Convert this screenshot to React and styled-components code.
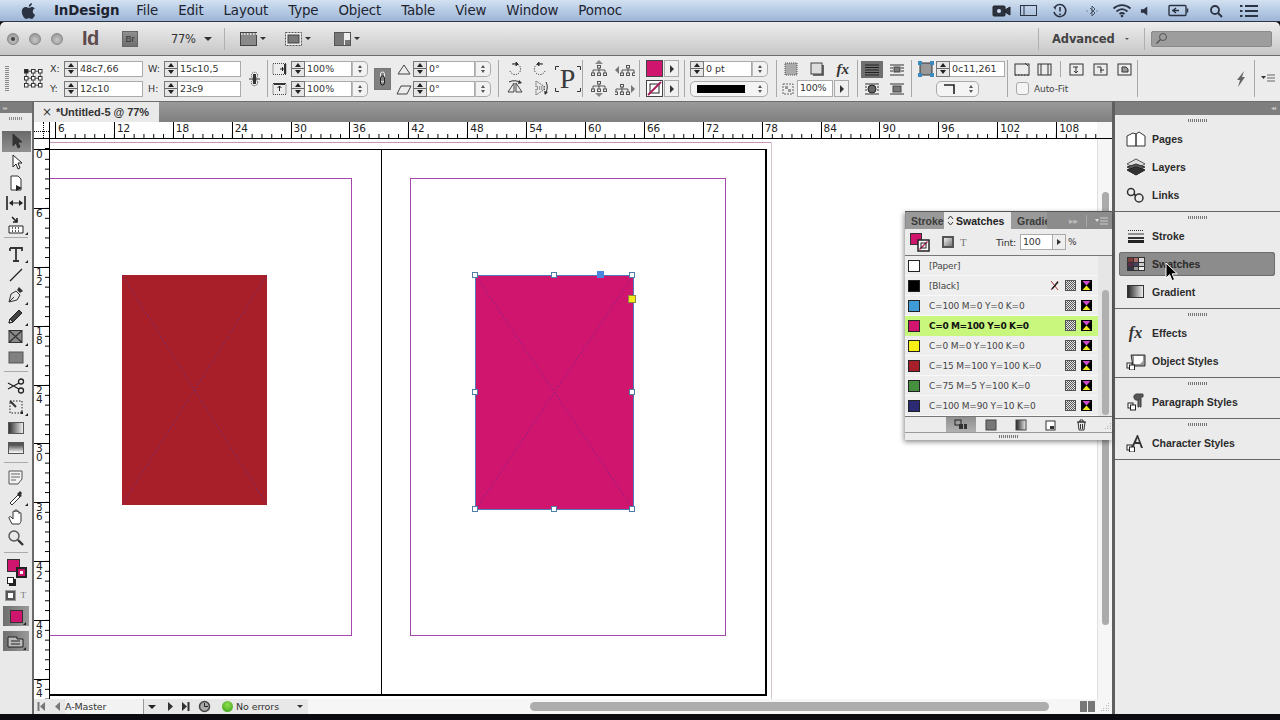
import React from "react";
import styled, { createGlobalStyle } from "styled-components";

const Global = createGlobalStyle`
  html, body { margin: 0; padding: 0; background: #0c0c10; }
  * { box-sizing: border-box; }
  #root { width: 1280px; height: 720px; overflow: hidden; }
`;
const UI = `"DejaVu Sans", "Liberation Sans", sans-serif`;
const BOLD = `"Liberation Sans", "DejaVu Sans", sans-serif`;

const Screen = styled.div`
  width: 1280px; height: 720px; display: flex; flex-direction: column;
  background: #0c0c10; font-family: ${UI}; color: #222; overflow: hidden;
`;

/* ---------- menu bar ---------- */
const MenuBar = styled.div`
  height: 22px; flex: none; display: flex; align-items: center; padding-left: 20px;
  background: linear-gradient(#d3e1f1, #b9cde6 45%, #9eb5d6);
  border-bottom: 1px solid #2c3440;
`;
const MenuItem = styled.span`
  font-size: 13.4px; letter-spacing: -0.14px; color: #1d2430; margin-left: ${p => p.$ml}px;
  font-weight: ${p => (p.$bold ? 700 : 400)};
`;
const MenuExtras = styled.div`
  margin-left: auto; display: flex; align-items: center; width: 294px; height: 21px;
`;
const ExtraSlot = styled.span`
  display: flex; align-items: center; justify-content: center; width: ${p => p.$w}px; flex: none;
`;

/* ---------- application bar ---------- */
const AppBar = styled.div`
  height: 33px; flex: none; display: flex; align-items: center;
  background: linear-gradient(#ededed, #c7c7c7);
  border-radius: 5px 5px 0 0;
`;
const Light = styled.span`
  width: 12px; height: 12px; border-radius: 50%; flex: none; margin-left: ${p => p.$ml}px;
  background: radial-gradient(circle at 50% 60%, #c8c8c8, #8b8b8b);
  border: 1px solid #8a8a8a; display: flex; align-items: center; justify-content: center;
  &::after { content: ""; width: 4px; height: 4px; border-radius: 50%; background: ${p => (p.$dot ? "#444" : "transparent")}; }
`;
const IdLogo = styled.span`
  font: 700 20px "Liberation Sans", sans-serif; color: #5d4a4c; margin-left: 19px; width: 23px; letter-spacing: -0.5px;
`;
const BrBox = styled.span`
  width: 16px; height: 16px; margin-left: 17px; background: linear-gradient(#8f8f8f, #6f6f6f);
  border: 1px solid #666; font: 9px "Liberation Sans", sans-serif; color: #333;
  display: flex; align-items: center; justify-content: center;
`;
const Zoom = styled.span`
  font-size: 11.5px; color: #333; margin-left: 33px; width: 33px; letter-spacing: -0.3px;
`;
const Arrow = styled.span`
  width: 0; height: 0; flex: none; margin-left: ${p => p.$ml || 0}px;
  border-left: ${p => p.$s || 4}px solid transparent; border-right: ${p => p.$s || 4}px solid transparent;
  border-top: ${p => p.$s || 4}px solid ${p => p.$c || "#333"};
`;
const BarSep = styled.span`
  width: 1px; height: 22px; flex: none; background: #b0b0b0; margin-left: ${p => p.$ml}px;
`;
const BarIcon = styled.span`
  display: flex; flex: none; align-items: center; gap: 2px; margin-left: ${p => p.$ml}px;
`;
const Advanced = styled.span`
  font-size: 11.5px; font-weight: 700; color: #444; margin-left: 13px; width: 66px; letter-spacing: -0.1px;
`;
const SearchBox = styled.span`
  width: 121px; height: 16px; margin-left: 6px; background: #9d9d9d; border: 1px solid #8a8a8a;
  border-radius: 2px; display: flex; align-items: center; padding-left: 3px;
`;

/* ---------- control panel ---------- */
const Control = styled.div`
  height: 47px; flex: none; display: flex; align-items: center; background: #ececec;
  border-top: 1px solid #6d6d6d; border-bottom: 1px solid #6d6d6d;
`;
const Slot = styled.div`
  width: ${p => p.$w}px; margin-left: ${p => p.$ml || 0}px; flex: none; height: 36px;
  display: flex; flex-direction: column; justify-content: space-between;
  align-items: ${p => (p.$center ? "center" : "stretch")};
  ${p => p.$middle && "justify-content: center;"}
`;
const VSep = styled.span`
  width: 1px; height: ${p => p.$h || 37}px; background: #a9a9a9; flex: none; margin-left: ${p => p.$ml || 0}px;
`;
const Row = styled.div`
  display: flex; align-items: center; height: 16px; padding-left: ${p => p.$pl || 0}px;
`;
const Around = styled.div`
  display: flex; align-items: center; justify-content: space-around; height: 17px;
`;
const Between = styled(Around)`
  justify-content: space-between; padding: 0 5px 0 2px;
`;
const FitRow = styled(Around)`
  justify-content: flex-start; padding-left: 6px; gap: 7px;
`;
const Lbl = styled.span`
  width: ${p => p.$w}px; flex: none; font-size: 9.5px; color: #333;
`;
const Spin = styled.span`
  width: 14px; height: 16px; flex: none; border: 1px solid #777; background: #e6e6e6;
  display: flex; flex-direction: column; align-items: center; justify-content: space-around;
  position: relative;
  &::after { content: ""; position: absolute; left: 0; right: 0; top: 6.5px; height: 1px; background: #666; }
`;
const SpinUp = styled.i`
  width: 0; height: 0; border-left: 3.5px solid transparent; border-right: 3.5px solid transparent; border-bottom: 4px solid #222;
`;
const SpinDown = styled.i`
  width: 0; height: 0; border-left: 3.5px solid transparent; border-right: 3.5px solid transparent; border-top: 4px solid #222;
`;
const Field = styled.span`
  flex: 1; height: 16px; background: #fff; border: 1px solid #aaa; border-left: none;
  font-size: 9.5px; color: #333; padding-left: 2px; line-height: 14px; white-space: nowrap; overflow: hidden;
`;
const Updown = styled.span`
  width: 16px; height: 16px; flex: none; background: #f2f2f2; border: 1px solid #aaa; border-left: 1px solid #bbb; border-radius: 0 5px 5px 0;
  display: flex; flex-direction: column; align-items: center; justify-content: center; gap: 2px;
`;
const TinyUp = styled.i`
  width: 0; height: 0; border-left: 2.5px solid transparent; border-right: 2.5px solid transparent; border-bottom: 3px solid #555;
`;
const TinyDown = styled.i`
  width: 0; height: 0; border-left: 2.5px solid transparent; border-right: 2.5px solid transparent; border-top: 3px solid #555;
`;
const TinyStack = styled.span`
  display: flex; flex-direction: column; gap: 2px;
`;
const Pill = styled.span`
  flex: ${p => (p.$w ? "none" : 1)}; width: ${p => (p.$w ? p.$w + "px" : "auto")}; margin-left: ${p => p.$ml || 0}px;
  height: 16px; border: 1px solid #aaa; border-radius: 5px; background: #f4f4f4;
  display: flex; align-items: center; justify-content: space-between; padding: 0 5px 0 6px;
`;
const StrokeBar = styled.span`
  display: block; width: 48px; height: 8px; background: #000;
`;
const ChainBtn = styled.span`
  width: 17px; height: 22px; display: flex; align-items: center; justify-content: center;
  background: #808080; border: 1px solid #777;
`;
const PFrame = styled.div`
  display: grid; place-items: center; width: 26px; height: 26px;
  & > * { grid-area: 1 / 1; }
`;
const PGlyph = styled.span`
  font: 400 28px "Liberation Serif", serif; color: #3a3a3a; line-height: 26px;
`;
const ColorChip = styled.span`
  width: 17px; height: 17px; flex: none; border: 1px solid #444; background: ${p => p.$c};
  display: flex; align-items: center; justify-content: center;
`;
const SmallArrowBox = styled.span`
  width: 15px; height: 17px; flex: none; margin-left: 1px; border: 1px solid #aaa; background: #f0f0f0;
  display: flex; align-items: center; justify-content: center;
  &::after { content: ""; border-top: 4px solid transparent; border-bottom: 4px solid transparent; border-left: 4px solid #333; }
`;
const PctBox = styled.span`
  width: 36px; height: 17px; margin-left: 3px; background: #fff; border: 1px solid #aaa;
  font-size: 9.5px; color: #333; line-height: 14px; padding-left: 2px; flex: none; letter-spacing: -0.2px;
`;
const FxMark = styled.span`
  font: italic 700 ${p => p.$s}px "Liberation Serif", serif; color: #333; line-height: ${p => p.$s}px;
`;
const WrapBtn = styled.span`
  width: 22px; height: 17px; display: flex; align-items: center; justify-content: center; flex: none;
  background: ${p => (p.$on ? "#6f6f6f" : "transparent")};
`;
const CheckBox = styled.span`
  width: 13px; height: 13px; flex: none; border: 1px solid #aaa; border-radius: 3px; background: #f4f4f4;
`;
const AutoFit = styled.span`
  font-size: 9px; color: #444; margin-left: 5px; letter-spacing: -0.1px;
`;
const Grip = styled.span`
  width: 4px; height: 26px; display: block; margin-left: 5px;
  background: repeating-linear-gradient(#888 0 1px, transparent 1px 2px);
`;
const BoltSlot = styled(Slot)`
  align-items: flex-end; padding-right: 6px;
`;
const SpinSpacer = styled.span`
  width: 19px; flex: none;
`;

/* ---------- workspace ---------- */
const Workspace = styled.div`
  height: 612px; flex: none; display: flex;
`;
const ToolColumn = styled.div`
  width: 34px; flex: none; background: #e9e9e9; border-right: 2px solid #6a6a6a;
  display: flex; flex-direction: column; align-items: center;
`;
const ToolHead = styled.div`
  width: 100%; height: 11px; background: #7d7d7d; color: #bbb; font-size: 6px; line-height: 11px; padding-left: 3px; letter-spacing: -1px; flex: none;
`;
const HGrip = styled.div`
  width: 14px; height: 3px; margin: 4px auto 11px; flex: none;
  background: repeating-linear-gradient(90deg, #8a8a8a 0 1px, transparent 1px 2px);
`;
const Tool = styled.div`
  width: 29px; height: ${p => p.$h || 20.7}px; flex: none; display: flex; align-items: center; justify-content: center;
  background: ${p => (p.$on ? "linear-gradient(#6a6a6a,#909090)" : "transparent")};
  position: relative;
`;
const ToolSep = styled.div`
  width: 24px; height: 1px; background: #aaa; flex: none; margin: ${p => p.$m || "3px 0"};
`;
const Doc = styled.div`
  width: 1078px; flex: none; display: flex; flex-direction: column; position: relative;
`;
const TabBar = styled.div`
  height: 20px; flex: none; background: linear-gradient(#9a9a9a, #7f7f7f); display: flex;
`;
const Tab = styled.div`
  width: 125px; background: #e9e9e9; display: flex; align-items: center; padding-left: 8px;
  font: 700 11px ${BOLD}; color: #333; letter-spacing: -0.05px;
`;
const TabClose = styled.span`
  width: 14px; font: 400 12px ${UI}; flex: none;
`;
const RulerRow = styled.div`
  height: 17px; flex: none; display: flex; background: #fff; border-bottom: 1px solid #000;
`;
const Corner = styled.div`
  width: 16px; flex: none; border-right: 1px solid #000; position: relative;
  &::before { content: ""; position: absolute; left: 9px; top: 0; bottom: 0; border-left: 1px dotted #000; }
  &::after { content: ""; position: absolute; top: 9px; left: 0; right: 0; border-top: 1px dotted #000; }
`;
const HRuler = styled.div`
  width: 1047px; flex: none; display: flex; overflow: hidden;
`;
const HCell = styled.div`
  width: ${p => p.$w || 58.9}px; flex: none; border-left: ${p => (p.$plain ? "none" : "1px solid #000")};
  font-size: 10.5px; line-height: 13px; padding-left: 2px; color: #222;
  background: repeating-linear-gradient(90deg, transparent 0 9.2px, #000 9.2px 10.0px, transparent 10px 9.8px) left bottom / 9.82px 4px repeat-x;
`;
const ScrollCorner = styled.div`
  flex: 1; background: #f6f6f6;
`;
const CanvasRow = styled.div`
  height: 560px; flex: none; display: flex;
`;
const VRuler = styled.div`
  width: 16px; flex: none; background: #fff; border-right: 1px solid #000; overflow: hidden; display: flex; flex-direction: column;
`;
const VCell = styled.div`
  height: ${p => p.$h || 58.9}px; flex: none; border-top: ${p => (p.$plain ? "none" : "1px solid #000")};
  font-size: 10.5px; line-height: 9px; padding: 0 0 0 2px; color: #222; white-space: pre-line;
  background: repeating-linear-gradient(180deg, transparent 0 9.2px, #000 9.2px 10px) right top / 4px 9.82px repeat-y;
`;
const Canvas = styled.div`
  width: 1047px; flex: none; position: relative; background: #fff; overflow: hidden;
`;
const VScroll = styled.div`
  flex: 1; background: #f6f6f6; border-left: 1px solid #e0e0e0; padding: 53px 3px 0 4px;
`;
const VThumb = styled.div`
  height: 433px; background: #ababab; border-radius: 4px;
`;
const Page = styled.div`
  position: absolute; left: 0; top: 10px; width: 717px; height: 547px;
  border-top: 1px solid #000; border-right: 2px solid #000; border-bottom: 2px solid #000;
`;
const Spine = styled.div`
  position: absolute; left: 331px; top: 10px; width: 1px; height: 547px; background: #000;
`;
const BleedH = styled.div`
  position: absolute; left: 0; top: 3px; width: 721px; height: 1px; background: #c695b8;
`;
const BleedV = styled.div`
  position: absolute; left: 721px; top: 3px; bottom: 0; width: 1px; background: #d3c4cf;
`;
const Margin = styled.div`
  position: absolute; left: ${p => p.$x}px; top: 39px; width: ${p => p.$w}px; height: 458px; border: 1px solid #a447ab;
`;
const Frame = styled.div`
  position: absolute; left: ${p => p.$x}px; top: 136px; width: ${p => p.$w}px; height: ${p => p.$h}px; background: ${p => p.$c};
  ${p => p.$sel && "border: 1px solid #5577b8;"}
`;
const Handle = styled.span`
  position: absolute; left: ${p => p.$x}px; top: ${p => p.$y}px; width: ${p => p.$s || 6}px; height: ${p => p.$s || 6}px;
  background: ${p => p.$c || "#fff"}; border: 1px solid ${p => p.$b || "#4f7fa8"};
`;
const Status = styled.div`
  height: 15px; flex: none; display: flex; align-items: center; background: #f6f6f6;
`;
const StatusLeft = styled.div`
  width: 274px; flex: none; height: 15px; background: #e8e8e8; display: flex; align-items: center;
`;
const StatusItem = styled.span`
  display: flex; align-items: center; flex: none; margin-left: ${p => p.$ml}px;
`;
const MasterField = styled.span`
  width: 79px; flex: none; margin-left: 4px; font-size: 9.5px; color: #333; height: 15px; line-height: 15px; background: #f2f2f2; border-right: 1px solid #999; letter-spacing: -0.1px;
`;
const StatusText = styled.span`
  font-size: 9.5px; color: #333; margin-left: 3px; width: 58px; letter-spacing: -0.1px;
`;
const GreenDot = styled.span`
  width: 11px; height: 11px; border-radius: 50%; background: radial-gradient(circle at 50% 35%, #8ee04c, #3b9a1c); flex: none; margin-left: 10px;
`;
const HThumb = styled.div`
  width: 519px; height: 9px; border-radius: 5px; background: #adadad; margin-left: 222px; flex: none;
`;
const Split = styled.span`
  width: 7px; height: 11px; background: #777; flex: none; margin-left: ${p => p.$ml}px;
`;
const Resize = styled.span`
  width: 9px; height: 9px; margin-left: ${p => p.$ml}px; flex: none;
  background: radial-gradient(circle, #777 0 .6px, transparent .8px) 0 0 / 2.5px 2.5px;
  clip-path: polygon(100% 0, 100% 100%, 0 100%);
`;

/* ---------- floating swatches panel ---------- */
const Swatches = styled.div`
  position: absolute; left: 871px; top: 109px; width: 207px; height: 229px; background: #ececec; z-index: 3;
  box-shadow: -1px 2px 5px rgba(0,0,0,.45); display: flex; flex-direction: column;
`;
const PanelTabs = styled.div`
  height: 18px; flex: none; background: #8c8c8c; display: flex; align-items: stretch; padding-left: 1px; border-top: 1px solid #555;
`;
const PanelTab = styled.div`
  width: ${p => p.$w}px; flex: none; overflow: hidden; white-space: nowrap;
  font: 700 10.5px ${BOLD}; line-height: 19px;
  padding-left: ${p => p.$pl}px; display: flex; align-items: flex-start; gap: 2px;
  background: ${p => (p.$on ? "#ececec" : "#9a9a9a")}; color: ${p => (p.$on ? "#222" : "#3c3c3c")};
`;
const TabChevrons = styled.span`
  display: flex; align-items: center; height: 17px; flex: none;
`;
const TabTools = styled.div`
  flex: 1; display: flex; align-items: center; justify-content: flex-end; gap: 8px; padding-right: 4px; color: #bbb; font-size: 9px;
`;
const TabDivider = styled.span`
  width: 1px; height: 12px; background: #a8a8a8;
`;
const TintRow = styled.div`
  height: 27px; flex: none; display: flex; align-items: center; padding-left: 5px; border-bottom: 1px solid #777;
`;
const TintGap = styled.span`
  width: 12px; flex: none;
`;
const TintBox = styled.span`
  width: 12px; height: 12px; flex: none; background: linear-gradient(135deg,#eee,#777); border: 2px solid #555;
`;
const TintT = styled.span`
  font: 11px "Liberation Serif", serif; color: #777; width: 9px; margin-left: 6px; flex: none;
`;
const TintLabel = styled.span`
  font-size: 9.5px; color: #333; margin-left: 27px; width: 23px; letter-spacing: -0.2px;
`;
const TintInput = styled.span`
  width: 33px; height: 16px; background: #fff; border: 1px solid #aaa; font-size: 9.5px; line-height: 14px; padding-left: 2px; color: #333; letter-spacing: -0.2px; margin-left: 1px;
`;
const TintArrow = styled.span`
  width: 13px; height: 16px; background: #eee; border: 1px solid #aaa; border-left: none; display: flex; align-items: center; justify-content: center;
  &::after { content: ""; border-top: 3.5px solid transparent; border-bottom: 3.5px solid transparent; border-left: 4px solid #333; }
`;
const Pct = styled.span`
  font-size: 9px; color: #333; margin-left: 2px;
`;
const ListWrap = styled.div`
  height: 161px; flex: none; display: flex; border-bottom: 1px solid #777;
`;
const List = styled.div`
  width: 193px; flex: none; display: flex; flex-direction: column;
`;
const SwatchRow = styled.div`
  height: 20px; flex: none; display: flex; align-items: center; padding-left: 3px;
  background: ${p => (p.$on ? "#c9f77d" : "#eeeeee")}; border-bottom: 1px solid ${p => (p.$on ? "#c9f77d" : "#f8f8f8")};
`;
const Chip = styled.span`
  width: 12px; height: 12px; flex: none; background: ${p => p.$c}; border: 1px solid #222;
`;
const SwatchName = styled.span`
  font-size: 9px; margin-left: 9px; letter-spacing: ${p => (p.$on ? "-0.38px" : "-0.18px")}; color: ${p => (p.$on ? "#111" : "#444")}; font-weight: ${p => (p.$on ? 700 : 400)};
  flex: 1; white-space: nowrap;
`;
const RowIcons = styled.span`
  display: flex; align-items: center; gap: 5px; margin-right: 6px; flex: none;
`;
const Checker = styled.span`
  width: 11px; height: 11px; flex: none; border: 1px solid #555;
  background: repeating-conic-gradient(#555 0 25%, #e8e8e8 0 50%) 0 0 / 2px 2px;
`;
const ListScroll = styled.div`
  flex: 1; background: #e6e6e6; padding: 34px 3px 1px 4px;
`;
const ListThumb = styled.div`
  height: 125px; background: #b0b0b0; border-radius: 4px;
`;
const PanelFoot = styled.div`
  height: 16px; flex: none; display: flex; align-items: center; padding-left: 41px; border-bottom: 1px solid #999;
`;
const FootBtn = styled.span`
  width: 30px; height: 15px; flex: none; display: flex; align-items: center; justify-content: center;
  background: ${p => (p.$on ? "linear-gradient(#909090,#b0b0b0)" : "transparent")};
`;
const PanelGrip = styled.div`
  height: 7px; flex: none; display: flex; align-items: center; justify-content: center;
`;
const SmallGrip = styled.span`
  display: block; width: 20px; height: 3px; background: repeating-linear-gradient(90deg, #777 0 1px, transparent 1px 2px);
`;

/* ---------- dock ---------- */
const Dock = styled.div`
  flex: 1; background: #ebebeb; border-left: 3px solid #5f5f5f; display: flex; flex-direction: column; position: relative;
`;
const DockHead = styled.div`
  height: 13px; flex: none; background: #7e7e7e; color: #c8c8c8; font-size: 6px; line-height: 12px; text-align: right; padding-right: 5px; letter-spacing: -1px;
`;
const DockGroup = styled.div`
  flex: none; display: flex; flex-direction: column; padding: 0 0 2px; border-bottom: 1px solid #666;
`;
const DockGrip = styled.div`
  height: 10px; display: flex; align-items: center; justify-content: center;
`;
const DockItem = styled.div`
  height: 24px; margin: 2px 5px 2px 4px; display: flex; align-items: center; padding-left: 5px; border-radius: 3px;
  font: 700 10.5px ${BOLD}; color: #2b2b2b;
  background: ${p => (p.$on ? "#8c8c8c" : "transparent")}; ${p => p.$on && "box-shadow: inset 0 0 0 1px #6d6d6d;"}
`;
const DockIcon = styled.span`
  width: 23px; flex: none; margin-right: 5px; display: flex; align-items: center; justify-content: center;
`;
const Cursor = styled.svg`
  position: absolute; left: 50px; top: 160px; z-index: 5;
`;

/* ---------- icons ---------- */
const S = ({ w = 16, h = 16, vb, children }) => (
  <svg width={w} height={h} viewBox={vb || `0 0 ${w} ${h}`} fill="none" stroke="#222" strokeWidth="1">{children}</svg>
);
const Apple = () => (
  <svg width="17" height="18" viewBox="0 0 17 17"><path fill="#2b3242" d="M12.2 4.5c-1.4 0-2.3.8-3.3.8-1.1 0-2-.8-3.2-.8C3.7 4.5 1.8 6.2 1.8 9c0 3.4 2.5 7.4 4.5 7.4 1 0 1.6-.7 2.7-.7 1.1 0 1.6.7 2.7.7 1.4 0 2.7-2.2 3.4-4.2-1.4-.6-2.3-1.7-2.3-3.2 0-1.3.8-2.3 1.9-3-.7-1-1.8-1.5-2.5-1.5zM8.8 4.2c0-1.9 1.3-3.5 3.2-3.7.1 2-1.4 3.7-3.2 3.7z"/></svg>
);
const Ex = {
  Cam: () => <S w={20} h={13}><rect x="1" y="2" width="12" height="10" fill="#2b3242" rx="1"/><path d="M13 6l5-3v8l-5-3z" fill="#2b3242"/><circle cx="7" cy="7" r="2" fill="#d0dcee" stroke="none"/></S>,
  Disp: () => <S w={18} h={13}><rect x=".5" y="1.5" width="16" height="10" stroke="#2b3242"/><path d="M4 1.5v10" stroke="#2b3242"/></S>,
  Time: () => <S w={16} h={16}><path d="M3 4a6 6 0 1 1-1 5" stroke="#2b3242" strokeWidth="1.6"/><path d="M8 4v4.5M8 10.5v1.5" stroke="#2b3242" strokeWidth="1.6"/><path d="M1 3.5l3 .5-.5 3z" fill="#2b3242" stroke="none"/></S>,
  Bt: () => <S w={14} h={14}><path d="M5 4l5 5-3 3V2l3 3-5 5" stroke="#4a5468"/><path d="M1.5 7h1M11.5 7h1" stroke="#4a5468"/></S>,
  Wifi: () => <S w={20} h={15}><path d="M1.5 5.5c5-4.5 12-4.5 17 0M4.5 8.5c3.5-3 7.5-3 11 0M7.5 11c1.5-1.2 3.5-1.2 5 0" stroke="#2b3242" strokeWidth="1.7"/><circle cx="10" cy="13" r="1.3" fill="#2b3242" stroke="none"/></S>,
  Vol: () => <S w={11} h={12}><path d="M1 4h3l4-3v10L4 8H1z" fill="#2b3242" stroke="none"/></S>,
  Bat: () => <S w={22} h={13}><rect x="1" y="1.5" width="17" height="10" rx="1" stroke="#2b3242" strokeWidth="1.4"/><path d="M19.5 4.5v4" stroke="#2b3242" strokeWidth="1.5"/><path d="M4 6.5h7M8 4l-3 2.5 3 2.5" stroke="#2b3242" strokeWidth="1.4"/></S>,
  Find: () => <S w={14} h={14}><circle cx="6" cy="6" r="4" stroke="#2b3242" strokeWidth="1.8"/><path d="M9 9l4 4" stroke="#2b3242" strokeWidth="2"/></S>,
  List: () => <S w={20} h={14}><path d="M6 2h13M6 7h13M6 12h13" stroke="#2b3242" strokeWidth="2.2"/><path d="M1 2h2.5M1 7h2.5M1 12h2.5" stroke="#2b3242" strokeWidth="2.2"/></S>,
};
const RefPoint = () => (
  <S w={19} h={19}>
    {[2, 9, 16].flatMap(y => [2, 9, 16].map(x => (
      <rect key={x + "-" + y} x={x - 1.5} y={y - 1.5} width="3.5" height="3.5" fill={x === 2 && y === 2 ? "#222" : "#fff"} stroke="#333" />
    )))}
    <path d="M4 2.2h3M11 2.2h3M4 9.2h3M11 9.2h3M4 16.2h3M11 16.2h3M2.2 4v3M9.2 4v3M16.2 4v3M2.2 11v3M9.2 11v3M16.2 11v3" stroke="#444"/>
  </S>
);
const Grid4 = () => (
  <S w={13} h={16}><circle cx="6.5" cy="4.5" r="3.2" stroke="#333" strokeDasharray="1 1"/><circle cx="6.5" cy="11.5" r="3.2" stroke="#333" strokeDasharray="1 1"/><path d="M1 8h11" stroke="#333"/><path d="M5 3h3v10H5z" fill="#333" stroke="none"/></S>
);
const Rot = ({ flip }) => (
  <S w={16} h={16}><g transform={flip ? "matrix(-1 0 0 1 16 0)" : undefined}><path d="M3 10a5.5 5.5 0 1 0 3-7" strokeDasharray="1.2 1.2" stroke="#333"/><path d="M5 3h6M11 3l-2-2v4z" fill="#333" stroke="#333"/></g></S>
);
const FlipI = ({ v }) => (
  <S w={18} h={18}><g transform={v ? "rotate(90 9 9)" : undefined}><path d="M8 4L2 13h6zM10 4l6 9h-6z" stroke="#444" strokeDasharray={v ? "1.2 1" : "none"}/><path d="M3 3q6-3 12 1" stroke="#333"/><path d="M13 1l3 3-4 1z" fill="#333" stroke="none"/></g></S>
);
const Tree = ({ arrow }) => {
  const dx = arrow === "left" ? 3 : arrow === "right" ? -3 : 0;
  const dy = arrow === "down" ? -3 : 0;
  return (
    <S w={20} h={18}>
      <g transform={`translate(${dx} ${dy})`}>
        <rect x="8.5" y="5.5" width="3" height="2.5" stroke="#555"/><path d="M10 8v2M4 13v-3h12v3M10 10v3" stroke="#555"/>
        <rect x="2.5" y="13" width="3" height="2.5" stroke="#555"/><rect x="8.5" y="13" width="3" height="2.5" stroke="#555"/><rect x="14.5" y="13" width="3" height="2.5" stroke="#555"/>
      </g>
      {arrow === "up" && <path d="M10 0l4 4H6z" fill="#888" stroke="none"/>}
      {arrow === "down" && <path d="M10 18l4-4H6z" fill="#888" stroke="none"/>}
      {arrow === "left" && <path d="M0 10l4-4v8z" fill="#777" stroke="none"/>}
      {arrow === "right" && <path d="M20 10l-4-4v8z" fill="#777" stroke="none"/>}
    </S>
  );
};

const ToolI = {
  arrow: <S><path d="M5 1v12l3-3 2 5 2-1-2-5h4z" fill="#333" stroke="#333"/></S>,
  white: <S><path d="M5 1v12l3-3 2 5 2-1-2-5h4z" fill="#fff" stroke="#222"/></S>,
  page: <S><path d="M3 1h7l3 3v11H3z" fill="#fff" stroke="#333"/><path d="M8 10l6 3-6 3z" fill="#222" stroke="none"/></S>,
  gap: <S w={20} h={16}><path d="M1 1v14M19 1v14" stroke="#222" strokeWidth="1.6"/><path d="M4 8h12" stroke="#222"/><path d="M3 8l4-3v6zM17 8l-4-3v6z" fill="#222" stroke="none"/></S>,
  coll: <S w={18} h={18}><path d="M2 10h14v7H2z" stroke="#222" fill="#fff"/><path d="M5 12h1M8 12h1M11 12h1M5 15h1M8 15h1M11 15h1" stroke="#222" strokeWidth="1.5"/><path d="M5 1l5 5M10 2v4H6" stroke="#222" strokeWidth="1.6"/></S>,
  type: <S w={18} h={18}><path d="M3 3h12v3M3 3v3M9 3v13M6 16h6" stroke="#333" strokeWidth="1.8"/></S>,
  line: <S><path d="M2 14L14 2" stroke="#222" strokeWidth="1.2"/></S>,
  pen: <S w={18} h={18}><path d="M2 16l2-8 5-3 4 4-3 5z" fill="#e8e8e8" stroke="#333"/><path d="M2 16l5-5" stroke="#333"/><path d="M10 4l2-3 4 4-3 2z" fill="#333" stroke="none"/></S>,
  pencil: <S w={18} h={18}><path d="M2 16l1-4 9-9 3 3-9 9z" fill="#444" stroke="#222"/><path d="M2 16l1-4 3 3z" fill="#ddd" stroke="#222"/></S>,
  frame: <S w={16} h={16}><rect x="1" y="1.5" width="13" height="12" fill="#8a8a8a" stroke="#333"/><path d="M1 1.5l13 12M14 1.5L1 13.5" stroke="#333" strokeWidth="1.2"/></S>,
  rect: <S w={16} h={16}><rect x="1" y="2" width="14" height="11" fill="#808080" stroke="#555"/></S>,
  sci: <S w={18} h={16}><circle cx="14" cy="3.5" r="2.5" stroke="#222" strokeWidth="1.3"/><circle cx="14" cy="12.5" r="2.5" stroke="#222" strokeWidth="1.3"/><path d="M12 5L1 11M12 11L1 5" stroke="#222" strokeWidth="1.3"/></S>,
  free: <S><rect x="2" y="2" width="12" height="12" strokeDasharray="1.5 1.5" stroke="#222"/><rect x="12.5" y="12.5" width="2.5" height="2.5" fill="#222" stroke="none"/><path d="M2 2l6 6" stroke="#333" strokeWidth="2"/></S>,
  note: <S w={16} h={16}><path d="M1 2h13v8l-4 5H1z" fill="#f2f2f2" stroke="#555"/><path d="M3 5h9M3 8h9M3 11h5" stroke="#666"/></S>,
  drop: <S><path d="M2 14l8-8 2 2-8 8z" fill="#fff" stroke="#333"/><path d="M10 4l2-2 2 2-1 2 1 1-2 1-3-3z" fill="#333" stroke="none"/></S>,
  hand: <S w={18} h={18}><path d="M5 16L2 10c-.5-1 1-2 2-1l2 2V4c0-1.5 2-1.5 2 0V2.8c0-1.5 2-1.5 2 0V4c0-1.4 2-1.4 2 0v1.5c0-1.3 2-1.3 2 0V12c0 2-1 4-2 4z" fill="#fff" stroke="#333"/></S>,
  zoom: <S w={18} h={18}><circle cx="7" cy="7" r="5" fill="#e8e8e8" stroke="#555" strokeWidth="1.4"/><path d="M11 11l5 5" stroke="#333" strokeWidth="2.4"/></S>,
  view: <S w={18} h={16}><path d="M1 4h9v2h6v8H1z" fill="#bbb" stroke="#222"/><path d="M4 8h9M4 11h9" stroke="#222"/></S>,
};
const CornerTri = styled.i`
  position: absolute; right: 3px; bottom: 1px; width: 0; height: 0;
  border-left: 3px solid transparent; border-bottom: 3px solid #222;
`;
const GradBox = styled.span`
  width: 16px; height: 12px; flex: none; border: 1px solid #555;
  background: ${p => (p.$fe ? "linear-gradient(#555 20%, #fff 100%)" : "linear-gradient(90deg,#333,#eee)")};
`;
const FillWrap = styled.div`
  width: 29px; height: 29px; flex: none; position: relative;
`;
const FillChip = styled.span`
  position: absolute; left: 5px; top: 0; width: 13px; height: 13px; background: #d0156f; border: 1px solid #333;
`;
const StrokeChip = styled.span`
  position: absolute; left: 14px; top: 8px; width: 11px; height: 11px; background: #fff; border: 2px solid #222;
  box-shadow: inset 0 0 0 2px #d0156f;
`;
const SmallChips = styled.span`
  position: absolute; left: 5px; top: 18px; width: 7px; height: 7px; background: #fff; border: 1px solid #222; box-shadow: 2px 2px 0 #222;
`;
const ContainerRow = styled.div`
  width: 29px; height: 12px; flex: none; display: flex; align-items: center; justify-content: center; gap: 6px; margin: 1px 0 5px;
`;
const MiniBox = styled.span`
  width: 9px; height: 9px; flex: none; background: #fff; border: 2px solid #555; box-shadow: 0 0 0 1px #999;
`;
const TMark = styled.span`
  font: 9px "Liberation Serif", serif; color: #777; width: 6px;
`;
const ApplyTile = styled.div`
  width: 26px; height: 20px; flex: none; margin-bottom: 5px; background: linear-gradient(90deg,#6e6e6e,#9a9a9a); display: flex; align-items: center; justify-content: center; position: relative;
`;
const ApplyChip = styled.span`
  width: 13px; height: 13px; background: #d0156f; border: 1px solid #333;
`;

const SW = [
  ["[Paper]", "#fff", "none"], ["[Black]", "#000", "x"], ["C=100 M=0 Y=0 K=0", "#3f9ad8"],
  ["C=0 M=100 Y=0 K=0", "#d0156f", "", true], ["C=0 M=0 Y=100 K=0", "#f8ee16"],
  ["C=15 M=100 Y=100 K=0", "#a81f2c"], ["C=75 M=5 Y=100 K=0", "#458f3f"], ["C=100 M=90 Y=10 K=0", "#2b2a72"],
];
const Cmyk = () => (
  <S w={11} h={11}>
    <rect x=".5" y=".5" width="10" height="10" fill="#000" stroke="#000"/>
    <path d="M1.5 1l4 4.5 4-4.5z" fill="#d04bd0" stroke="none"/>
    <path d="M1.5 10l4-4.5 4 4.5z" fill="#f0e820" stroke="none"/>
  </S>
);
const Diag = ({ c }) => (
  <svg width="100%" height="100%" viewBox="0 0 100 100" preserveAspectRatio="none" style={{ display: "block" }}>
    <path d="M0 0L100 100M100 0L0 100" stroke={c} strokeOpacity=".7" strokeWidth="1" strokeDasharray="1.5 2.5" fill="none" vectorEffect="non-scaling-stroke" />
  </svg>
);

const DOCK = [
  [["Pages", <S w={20} h={16}><path d="M1 5l6-3 3 1v12H1zM10 3l3-2 6 4v10h-9z" fill="#fff" stroke="#333"/></S>],
   ["Layers", <S w={22} h={18}><path d="M11 1l9 5-9 5-9-5z" fill="#ddd" stroke="#555"/><path d="M2 9l9 5 9-5-9-3z" fill="#555" stroke="#333"/><path d="M2 12l9 5 9-5-9-3z" fill="#333" stroke="#222"/></S>],
   ["Links", <S w={20} h={16}><circle cx="5" cy="5" r="3.5" stroke="#333" strokeWidth="1.5"/><circle cx="13" cy="11" r="4" stroke="#333" strokeWidth="1.5"/><path d="M8 7l2 2" stroke="#333" strokeWidth="2"/></S>]],
  [["Stroke", <S w={18} h={14}><path d="M1 1.5h16" stroke="#333" strokeDasharray="1 1"/><path d="M1 5h16" stroke="#333"/><path d="M1 9h16" stroke="#333" strokeWidth="2"/><path d="M1 12.5h16" stroke="#222" strokeWidth="3"/></S>],
   ["Swatches", <S w={18} h={14}><rect width="18" height="14" fill="#333" stroke="none"/><rect x="1" y="1" width="5" height="4" fill="#7a3a3a" stroke="none"/><rect x="7" y="1" width="4" height="4" fill="#aa6a6a" stroke="none"/><rect x="12" y="1" width="5" height="4" fill="#ddd" stroke="none"/><rect x="1" y="6" width="5" height="3" fill="#5a2a4a" stroke="none"/><rect x="7" y="6" width="4" height="3" fill="#444466" stroke="none"/><rect x="12" y="6" width="5" height="3" fill="#ccc" stroke="none"/><rect x="1" y="10" width="5" height="3" fill="#334" stroke="none"/><rect x="7" y="10" width="4" height="3" fill="#999" stroke="none"/><rect x="12" y="10" width="5" height="3" fill="#eee" stroke="none"/></S>],
   ["Gradient", <S w={18} h={14}><defs><linearGradient id="dg"><stop offset="0" stopColor="#222"/><stop offset="1" stopColor="#f4f4f4"/></linearGradient></defs><rect x=".5" y=".5" width="16" height="12" fill="url(#dg)" stroke="#333"/></S>]],
  [["Effects", <FxMark $s={16}>fx</FxMark>],
   ["Object Styles", <S w={20} h={18}><path d="M5 3h14v11H7z" fill="#999" stroke="#333"/><path d="M8 4h9v5l-3 3H8z" fill="#fff" stroke="none"/><rect x="1" y="11" width="5" height="5" fill="#fff" stroke="#222"/><rect x="3.5" y="13" width="5" height="5" fill="#fff" stroke="#222"/></S>]],
  [["Paragraph Styles", <S w={20} h={18}><path d="M10 1h7v3h-2v10h-1V6h-1v8h-1V7a3 3 0 0 1-2-6z" fill="#555" stroke="#444"/><rect x="2" y="10" width="5" height="5" fill="#fff" stroke="#222"/><rect x="4.5" y="12" width="5" height="5" fill="#fff" stroke="#222"/></S>]],
  [["Character Styles", <S w={20} h={18}><path d="M5 14l6-13h1l5 13h-2l-1.5-4H9l-2 4zM10 8h3l-1.5-4z" fill="#333" stroke="none"/><rect x="1" y="11" width="5" height="5" fill="#fff" stroke="#222"/><rect x="3.5" y="13" width="5" height="5" fill="#fff" stroke="#222"/></S>]],
];

const Spinner = () => <Spin><SpinUp /><SpinDown /></Spin>;
const UD = () => <Updown><TinyUp /><TinyDown /></Updown>;
const Tri = ({ c = "#333", dir = "right" }) => (
  <S w={7} h={9}>{dir === "right" ? <path d="M1 0l5 4.5L1 9z" fill={c} stroke="none"/> : <path d="M6 0L1 4.5 6 9z" fill={c} stroke="none"/>}</S>
);

const hLabels = [6,12,18,24,30,36,42,48,54,60,66,72,78,84,90,96,102,108];
const vLabels = ["0","6","1\n2","1\n8","2\n4","3\n0","3\n6","4\n2","4\n8"];

export default function App() {
  return (
    <Screen>
      <Global />
      <MenuBar>
        <Apple />
        <MenuItem $ml={17} $bold>InDesign</MenuItem>
        <MenuItem $ml={17}>File</MenuItem>
        <MenuItem $ml={20}>Edit</MenuItem>
        <MenuItem $ml={20}>Layout</MenuItem>
        <MenuItem $ml={20}>Type</MenuItem>
        <MenuItem $ml={20}>Object</MenuItem>
        <MenuItem $ml={20}>Table</MenuItem>
        <MenuItem $ml={20}>View</MenuItem>
        <MenuItem $ml={20}>Window</MenuItem>
        <MenuItem $ml={20}>Pomoc</MenuItem>
        <MenuExtras>
          <ExtraSlot $w={32}><Ex.Cam /></ExtraSlot>
          <ExtraSlot $w={22}><Ex.Disp /></ExtraSlot>
          <ExtraSlot $w={40}><Ex.Time /></ExtraSlot>
          <ExtraSlot $w={24}><Ex.Bt /></ExtraSlot>
          <ExtraSlot $w={36}><Ex.Wifi /></ExtraSlot>
          <ExtraSlot $w={10}><Ex.Vol /></ExtraSlot>
          <ExtraSlot $w={58}><Ex.Bat /></ExtraSlot>
          <ExtraSlot $w={16}><Ex.Find /></ExtraSlot>
          <ExtraSlot $w={50}><Ex.List /></ExtraSlot>
        </MenuExtras>
      </MenuBar>

      <AppBar>
        <Light $ml={7} $dot />
        <Light $ml={10} />
        <Light $ml={10} />
        <IdLogo>Id</IdLogo>
        <BrBox>Br</BrBox>
        <Zoom>77%</Zoom>
        <Arrow $ml={0} />
        <BarSep $ml={12} />
        <BarIcon $ml={15}>
          <S w={18} h={16}><rect x=".5" y="1.5" width="16" height="13" fill="#8a8a8a" stroke="#444"/><path d="M1 3h16" stroke="#ddd" strokeDasharray="1.5 1.5" strokeWidth="2"/></S>
          <Arrow $s={3} />
        </BarIcon>
        <BarIcon $ml={19}>
          <S w={18} h={16}><rect x=".5" y="1.5" width="16" height="13" fill="#eee" stroke="#555" strokeDasharray="2 1"/><rect x="3" y="4" width="11" height="8" fill="#777" stroke="#444"/></S>
          <Arrow $s={3} />
        </BarIcon>
        <BarIcon $ml={23}>
          <S w={18} h={16}><rect x=".5" y="1.5" width="16" height="13" fill="#eee" stroke="#555"/><rect x="1" y="2" width="9" height="12" fill="#777" stroke="none"/><rect x="11" y="9" width="5" height="5" fill="#777" stroke="none"/></S>
          <Arrow $s={3} />
        </BarIcon>
        <BarSep $ml={678} />
        <Advanced>Advanced</Advanced>
        <Arrow $s={2.5} $ml={7} $c="#555" />
        <BarSep $ml={15} />
        <SearchBox>
          <S w={13} h={13}><circle cx="8" cy="5" r="3.5" stroke="#555"/><path d="M5.5 7.5L1.5 11.5" stroke="#555" strokeWidth="1.4"/></S>
        </SearchBox>
      </AppBar>

      <Control>
        <Slot $w={20} $middle><Grip /></Slot>
        <Slot $w={26} $middle $center><RefPoint /></Slot>
        <Slot $w={93} $ml={4}>
          <Row><Lbl $w={14}>X:</Lbl><Spinner /><Field>48c7,66</Field></Row>
          <Row><Lbl $w={14}>Y:</Lbl><Spinner /><Field>12c10</Field></Row>
        </Slot>
        <Slot $w={93} $ml={5}>
          <Row><Lbl $w={16}>W:</Lbl><Spinner /><Field>15c10,5</Field></Row>
          <Row><Lbl $w={16}>H:</Lbl><Spinner /><Field>23c9</Field></Row>
        </Slot>
        <Slot $w={26} $middle $center><Grid4 /></Slot>
        <VSep />
        <Slot $w={96} $ml={4}>
          <Row><S w={16} h={14}><rect x="1" y="1.5" width="13" height="11" stroke="#444" strokeDasharray="1 1"/><path d="M8 7h4M10.5 5v4" stroke="#222"/><path d="M13 2v10" stroke="#333" strokeWidth="2"/></S><Lbl $w={3} /><Spinner /><Field>100%</Field><UD /></Row>
          <Row><S w={16} h={14}><rect x="1" y="1.5" width="13" height="11" stroke="#444" strokeDasharray="1 1"/><path d="M7.5 4v5M5.5 6l2-2 2 2" stroke="#222"/><path d="M2 2h11" stroke="#333" strokeWidth="2"/></S><Lbl $w={3} /><Spinner /><Field>100%</Field><UD /></Row>
        </Slot>
        <Slot $w={17} $ml={6} $middle><ChainBtn><S w={9} h={15}><rect x="2.5" y="1" width="4" height="10" rx="2" stroke="#eee"/><rect x="2.5" y="5" width="4" height="9" rx="2" stroke="#222"/></S></ChainBtn></Slot>
        <Slot $w={95} $ml={5}>
          <Row><S w={16} h={14}><path d="M2 12h12L8 3z" stroke="#444"/></S><Lbl $w={1} /><Spinner /><Field>0°</Field><UD /></Row>
          <Row><S w={16} h={14}><path d="M1 12l4-8h10l-4 8z" stroke="#444"/></S><Lbl $w={1} /><Spinner /><Field>0°</Field><UD /></Row>
        </Slot>
        <VSep $ml={7} />
        <Slot $w={50} $ml={3}>
          <Around><Rot /><Rot flip /></Around>
          <Around><FlipI /><FlipI v /></Around>
        </Slot>
        <Slot $w={29} $ml={1} $middle $center>
          <PFrame>
            <S w={26} h={26}><path d="M.5 4V.5H4M22 .5h3.5V4M.5 22v3.5H4M22 25.5h3.5V22" stroke="#333"/></S>
            <PGlyph>P</PGlyph>
          </PFrame>
        </Slot>
        <VSep />
        <Slot $w={52} $ml={3}>
          <Around><Tree arrow="up" /><Tree arrow="left" /></Around>
          <Around><Tree arrow="down" /><Tree arrow="right" /></Around>
        </Slot>
        <VSep $ml={1} />
        <Slot $w={33} $ml={6}>
          <Row><ColorChip $c="#d0156f" /><SmallArrowBox /></Row>
          <Row><ColorChip $c="#fff"><S w={15} h={15}><rect x="3" y="3" width="9" height="9" stroke="#222"/><path d="M1 14L14 1" stroke="#a81f5c" strokeWidth="2"/></S></ColorChip><SmallArrowBox /></Row>
        </Slot>
        <VSep $ml={5} />
        <Slot $w={78} $ml={5}>
          <Row><Spinner /><Field>0 pt</Field><UD /></Row>
          <Row><Pill><StrokeBar /><TinyStack><TinyUp /><TinyDown /></TinyStack></Pill></Row>
        </Slot>
        <VSep $ml={8} />
        <Slot $w={72} $ml={5}>
          <Between>
            <S w={15} h={15}><rect x="1" y="1" width="12" height="12" fill="#aaa" stroke="#555" strokeDasharray="1 1"/></S>
            <S w={15} h={15}><rect x="1" y="1" width="11" height="11" fill="#ddd" stroke="#444"/><path d="M13 3v10H3" stroke="#444" strokeWidth="1.6"/></S>
            <FxMark $s={15}>fx</FxMark>
          </Between>
          <Row><S w={12} h={12}><rect x="1" y="1" width="10" height="10" stroke="#666" strokeDasharray="2 1"/><rect x="3" y="3" width="3" height="3" fill="#999" stroke="none"/><rect x="6" y="6" width="3" height="3" fill="#999" stroke="none"/></S><PctBox>100%</PctBox><SmallArrowBox /></Row>
        </Slot>
        <VSep $ml={3} />
        <Slot $w={50} $ml={1}>
          <Around>
            <WrapBtn $on><S w={16} h={13}><path d="M1 2h14M1 4.5h14M1 7h14M1 9.5h14M1 12h14" stroke="#222"/></S></WrapBtn>
            <WrapBtn><S w={16} h={13}><path d="M1 2h14M1 12h14M1 5h3M12 5h3M1 8h3M12 8h3" stroke="#333"/><rect x="5" y="4" width="6" height="5" fill="#777" stroke="#444"/></S></WrapBtn>
          </Around>
          <Around>
            <WrapBtn><S w={16} h={13}><path d="M1 2h14M1 12h14M1 5h2M13 5h2M1 8h2M13 8h2" stroke="#333"/><circle cx="8" cy="7" r="4" fill="#666"/></S></WrapBtn>
            <WrapBtn><S w={16} h={13}><path d="M1 2h14M1 12h14" stroke="#333"/><rect x="4" y="4" width="8" height="6" fill="#777" stroke="#444"/></S></WrapBtn>
          </Around>
        </Slot>
        <VSep $ml={2} />
        <Slot $w={88} $ml={5}>
          <Row><S w={19} h={16}><rect x="3" y="2" width="12" height="12" fill="#999" stroke="#333"/><g fill="#3a8ac0" stroke="none"><rect x="1" y="0" width="4" height="4"/><rect x="13" y="0" width="4" height="4"/><rect x="1" y="12" width="4" height="4"/><rect x="13" y="12" width="4" height="4"/></g></S><Spinner /><Field>0c11,261</Field></Row>
          <Row><SpinSpacer /><Pill $w={43}><S w={14} h={12}><path d="M1 2h10v9" stroke="#222" strokeWidth="1.6"/></S><TinyStack><TinyUp /><TinyDown /></TinyStack></Pill></Row>
        </Slot>
        <VSep $ml={2} />
        <Slot $w={128}>
          <FitRow>
            <S w={16} h={15}><rect x="1" y="2" width="14" height="11" stroke="#333"/><path d="M1 13h14" stroke="#333" strokeDasharray="1.5 1.5"/><path d="M11 1l3 3" stroke="#333"/></S>
            <S w={16} h={15}><rect x="1" y="2" width="13" height="11" stroke="#333"/><path d="M4 2v11M11 2v11" stroke="#333"/></S>
            <VSep $h={16} />
            <S w={17} h={15}><rect x="2" y="2" width="13" height="11" stroke="#333"/><path d="M5 5h5M8 5v6M6 9l2 2 2-2" stroke="#333"/></S>
            <S w={17} h={15}><rect x="2" y="2" width="13" height="11" stroke="#333"/><path d="M5 5h4v6M12 8H8" stroke="#333"/></S>
            <S w={17} h={15}><rect x="2" y="2" width="13" height="11" stroke="#333"/><path d="M6 5h4l2 2v3H6z" fill="#999" stroke="#333"/></S>
          </FitRow>
          <Row $pl={8}><CheckBox /><AutoFit>Auto-Fit</AutoFit></Row>
        </Slot>
        <VSep $ml={1} />
        <BoltSlot $w={116} $middle>
          <S w={14} h={18}><path d="M10 1L3 10h3l-2 7 7-10H8z" fill="#666" stroke="none"/></S>
        </BoltSlot>
        <VSep />
        <Slot $w={25} $middle $center>
          <S w={16} h={9}><path d="M1 2l5 0-2.5 3z" fill="#333" stroke="none"/><path d="M7 1h8M7 4h8M7 7h8" stroke="#666"/></S>
        </Slot>
      </Control>

      <Workspace>
        <ToolColumn>
          <ToolHead>▸▸</ToolHead>
          <HGrip />
          <Tool $on>{ToolI.arrow}</Tool>
          <Tool>{ToolI.white}</Tool>
          <Tool>{ToolI.page}</Tool>
          <Tool>{ToolI.gap}</Tool>
          <Tool $h={22}>{ToolI.coll}<CornerTri /></Tool>
          <ToolSep $m="1px 0 6px" />
          <Tool>{ToolI.type}<CornerTri /></Tool>
          <Tool>{ToolI.line}</Tool>
          <Tool>{ToolI.pen}<CornerTri /></Tool>
          <Tool>{ToolI.pencil}<CornerTri /></Tool>
          <Tool>{ToolI.frame}<CornerTri /></Tool>
          <Tool>{ToolI.rect}<CornerTri /></Tool>
          <ToolSep $m="3px 0 4px" />
          <Tool>{ToolI.sci}</Tool>
          <Tool>{ToolI.free}<CornerTri /></Tool>
          <Tool><GradBox /></Tool>
          <Tool><GradBox $fe /></Tool>
          <ToolSep $m="3px 0 4px" />
          <Tool>{ToolI.note}</Tool>
          <Tool $h={19.5}>{ToolI.drop}<CornerTri /></Tool>
          <Tool>{ToolI.hand}</Tool>
          <Tool>{ToolI.zoom}</Tool>
          <ToolSep $m="4px 0 6px" />
          <FillWrap><FillChip /><StrokeChip /><SmallChips /></FillWrap>
          <ContainerRow><MiniBox /><TMark>T</TMark></ContainerRow>
          <ApplyTile><ApplyChip /><CornerTri /></ApplyTile>
          <ApplyTile>{ToolI.view}<CornerTri /></ApplyTile>
        </ToolColumn>

        <Doc>
          <TabBar>
            <Tab><TabClose>×</TabClose>*Untitled-5 @ 77%</Tab>
          </TabBar>
          <RulerRow>
            <Corner />
            <HRuler>
              <HCell $w={5} $plain />
              {hLabels.map(n => <HCell key={n}>{n}</HCell>)}
            </HRuler>
            <ScrollCorner />
          </RulerRow>
          <CanvasRow>
            <VRuler>
              <VCell $h={10} $plain />
              {vLabels.map(n => <VCell key={n}>{n}</VCell>)}
              <VCell $h={21}>{"5\n4"}</VCell>
            </VRuler>
            <Canvas>
              <BleedH />
              <BleedV />
              <Page />
              <Spine />
              <Margin $x={-10} $w={312} />
              <Margin $x={360} $w={316} />
              <Frame $x={72} $w={145} $h={230} $c="#a81f2a"><Diag c="#4a2f9a" /></Frame>
              <Frame $x={425} $w={159} $h={235} $c="#d0156f" $sel><Diag c="#5a2a9a" /></Frame>
              {[[422,133],[501,133],[579,133],[422,250],[579,250],[422,367],[501,367],[579,367]].map(([x,y]) => (
                <Handle key={x + "-" + y} $x={x} $y={y} />
              ))}
              <Handle $x={547} $y={132} $s={7} $c="#4a86e0" $b="#4a86e0" />
              <Handle $x={578} $y={156} $s={8} $c="#f3ea1a" $b="#8a8a40" />
            </Canvas>
            <VScroll><VThumb /></VScroll>
          </CanvasRow>
          <Status>
            <StatusLeft>
              <StatusItem $ml={3}><S w={9} h={11}><path d="M1.5 1v9" stroke="#777" strokeWidth="2"/><path d="M8 1L3 5.5 8 10z" fill="#777" stroke="none"/></S></StatusItem>
              <StatusItem $ml={8}><Tri c="#777" dir="left" /></StatusItem>
              <MasterField>A-Master</MasterField>
              <StatusItem $ml={4}><Arrow $s={4} $c="#222" /></StatusItem>
              <StatusItem $ml={11}><Tri c="#333" /></StatusItem>
              <StatusItem $ml={7}><S w={9} h={11}><path d="M1 1l5 4.5L1 10z" fill="#333" stroke="none"/><path d="M7.5 1v9" stroke="#333" strokeWidth="2"/></S></StatusItem>
              <StatusItem $ml={8}><S w={14} h={13}><circle cx="6.5" cy="6.5" r="5" fill="#aaa" stroke="#444" strokeWidth="1.5"/><path d="M6.5 3v3.5H10" stroke="#222"/></S></StatusItem>
              <GreenDot />
              <StatusText>No errors</StatusText>
              <StatusItem $ml={3}><Arrow $s={3.5} $c="#333" /></StatusItem>
            </StatusLeft>
            <HThumb />
            <Split $ml={31} />
            <Split $ml={1} />
            <Resize $ml={5} />
          </Status>

          <Swatches>
            <PanelTabs>
              <PanelTab $w={38} $pl={5}>Stroke</PanelTab>
              <PanelTab $w={67} $pl={3} $on>
                <TabChevrons><S w={7} h={11}><path d="M1 4l2.5-3L6 4M1 7l2.5 3L6 7" stroke="#333"/></S></TabChevrons>
                Swatches
              </PanelTab>
              <PanelTab $w={36} $pl={6}>Gradient</PanelTab>
              <TabTools>
                <span>▸▸</span>
                <TabDivider />
                <S w={13} h={8}><path d="M0 2l4 0-2 3z" fill="#ddd" stroke="none"/><path d="M5 1h8M5 4h8M5 7h8" stroke="#ccc"/></S>
              </TabTools>
            </PanelTabs>
            <TintRow>
              <S w={20} h={20}><rect x=".5" y="1.5" width="11" height="11" fill="#d0156f" stroke="#333"/><rect x="8" y="8" width="11" height="11" fill="#fff" stroke="#222" strokeWidth="1.5"/><path d="M9.5 17.5l8-8" stroke="#c0206a" strokeWidth="1.5"/><rect x="11" y="11" width="5" height="5" stroke="#222"/></S>
              <TintGap />
              <TintBox />
              <TintT>T</TintT>
              <TintLabel>Tint:</TintLabel>
              <TintInput>100</TintInput>
              <TintArrow />
              <Pct>%</Pct>
            </TintRow>
            <ListWrap>
              <List>
                {SW.map(([name, c, kind, on]) => (
                  <SwatchRow key={name} $on={on}>
                    <Chip $c={c} />
                    <SwatchName $on={on}>{name}</SwatchName>
                    {kind !== "none" && (
                      <RowIcons>
                        {kind === "x" && <S w={11} h={11}><path d="M2 1l7 9M9 1L2 10" stroke="#a33"/><path d="M3 9l6-7" stroke="#222" strokeWidth="1.4"/></S>}
                        <Checker />
                        <Cmyk />
                      </RowIcons>
                    )}
                  </SwatchRow>
                ))}
              </List>
              <ListScroll><ListThumb /></ListScroll>
            </ListWrap>
            <PanelFoot>
              <FootBtn $on><S w={15} h={12}><rect x="1" y="1" width="6" height="5" fill="none" stroke="#222"/><rect x="5" y="5" width="4" height="5" fill="#333" stroke="none"/><rect x="10" y="5" width="3" height="5" fill="#333" stroke="none"/></S></FootBtn>
              <FootBtn><S w={12} h={12}><rect x="1" y="1" width="10" height="10" fill="#777" stroke="#444"/></S></FootBtn>
              <FootBtn><S w={12} h={12}><defs><linearGradient id="fg"><stop offset="0" stopColor="#222"/><stop offset="1" stopColor="#eee"/></linearGradient></defs><rect x="1" y="1" width="10" height="10" fill="url(#fg)" stroke="#444"/></S></FootBtn>
              <FootBtn><S w={12} h={12}><rect x="1" y="2" width="9" height="9" fill="#fff" stroke="#333"/><path d="M5 7l4-0v3H5z" fill="#333" stroke="none"/></S></FootBtn>
              <FootBtn><S w={11} h={12}><path d="M2 3h7l-1 8H3zM1 3h9M4 3V1h3v2M4.5 5v5M6.5 5v5" stroke="#333"/></S></FootBtn>
              <Resize $ml={8} />
            </PanelFoot>
            <PanelGrip><SmallGrip /></PanelGrip>
          </Swatches>
        </Doc>

        <Dock>
          <DockHead>◂◂</DockHead>
          {DOCK.map((group, i) => (
            <DockGroup key={i}>
              <DockGrip><SmallGrip /></DockGrip>
              {group.map(([name, icon]) => (
                <DockItem key={name} $on={name === "Swatches"}>
                  <DockIcon>{icon}</DockIcon>{name}
                </DockItem>
              ))}
            </DockGroup>
          ))}
          <Cursor width="14" height="20" viewBox="0 0 14 20">
            <path d="M1 1v15l3.6-3.4 2.4 6 2.6-1-2.4-5.8h5z" fill="#000" stroke="#fff" strokeWidth="1" />
          </Cursor>
        </Dock>
      </Workspace>
    </Screen>
  );
}
